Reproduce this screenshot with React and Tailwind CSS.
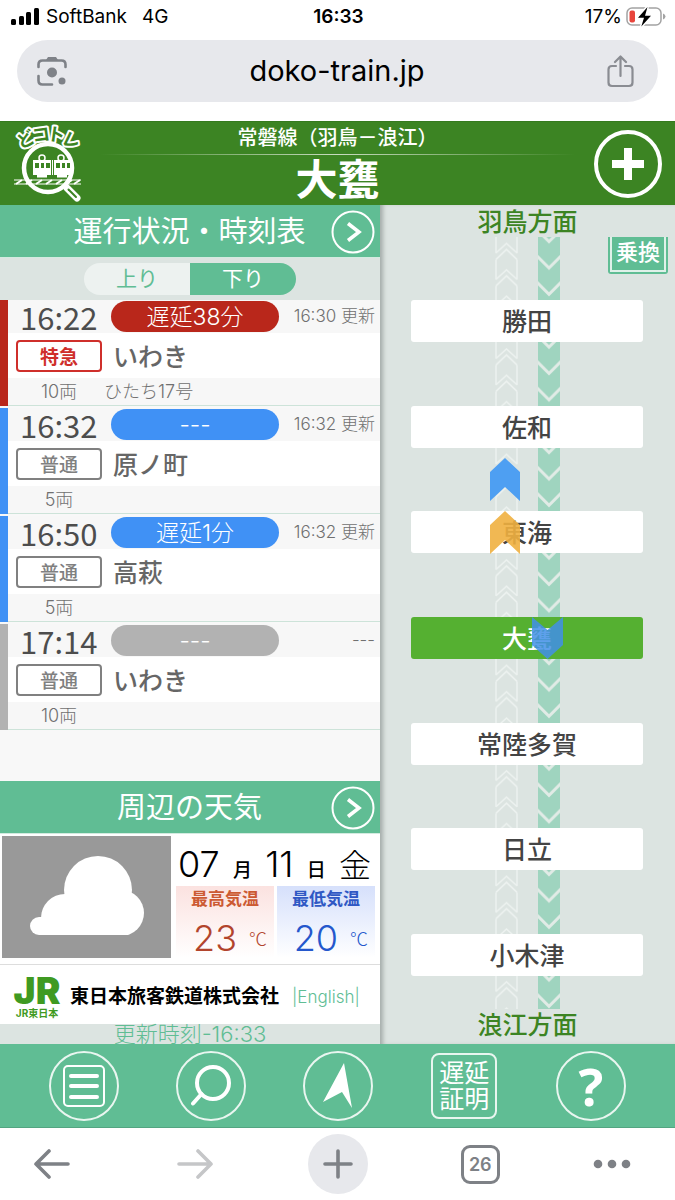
import { useState } from "react";

const trains = [
  {
    time: "16:22",
    status: "遅延38分",
    updated: "16:30 更新",
    type: "特急",
    dest: "いわき",
    cars: "10両",
    name: "ひたち17号",
    bar: "bg-[#b9271b]",
    typeStyle: "border-[#cf2f2b] text-[#cf2f2b] font-bold",
  },
  {
    time: "16:32",
    status: "---",
    updated: "16:32 更新",
    type: "普通",
    dest: "原ノ町",
    cars: "5両",
    bar: "bg-[#4091f5]",
    typeStyle: "border-[#808080] text-[#808080] font-medium",
  },
  {
    time: "16:50",
    status: "遅延1分",
    updated: "16:32 更新",
    type: "普通",
    dest: "高萩",
    cars: "5両",
    bar: "bg-[#4091f5]",
    typeStyle: "border-[#808080] text-[#808080] font-medium",
  },
  {
    time: "17:14",
    status: "---",
    updated: "---",
    type: "普通",
    dest: "いわき",
    cars: "10両",
    bar: "bg-[#b2b2b2]",
    typeStyle: "border-[#808080] text-[#808080] font-medium",
  },
];

const stations = ["勝田", "佐和", "東海", "大甕", "常陸多賀", "日立", "小木津"];

const StatusBar = () => (
  <div className="grid grid-cols-3 items-center h-[34px] pl-[11px] pr-[9px] text-[19px]">
    <div className="flex items-center gap-[7px] whitespace-nowrap">
      <svg width="28" height="18" viewBox="0 0 28 18" aria-hidden="true">
        <rect x="0" y="11" width="5" height="6" rx="1.5" />
        <rect x="8" y="8" width="5" height="9" rx="1.5" />
        <rect x="15" y="4" width="5" height="13" rx="1.5" />
        <rect x="23" y="0" width="5" height="17" rx="1.5" />
      </svg>
      <span>SoftBank</span>
      <span className="ml-2">4G</span>
    </div>
    <div className="text-center font-semibold">16:33</div>
    <div className="flex items-center justify-end gap-1">
      <span>17%</span>
      <svg width="40" height="20" viewBox="0 0 40 20" aria-hidden="true">
        <rect x="1" y="1" width="34" height="17" rx="5" fill="none" stroke="#a3a3a3" strokeWidth="1.5" />
        <rect x="3.500" y="3.500" width="5.500" height="12" rx="2" fill="#e8453c" />
        <path d="M37 6.500q2.500 1 2.500 3t-2.500 3z" fill="#a3a3a3" />
        <path d="M21.500 0 12 10.800h6L15.300 19.500 25 8.700h-6z" stroke="#fff" strokeWidth="3" />
        <path d="M21.500 0 12 10.800h6L15.300 19.500 25 8.700h-6z" />
      </svg>
    </div>
  </div>
);

const AddressBar = () => (
  <div className="flex items-center justify-between h-[62px] mx-[17px] mt-1.5 mb-[19px] px-5 rounded-full bg-[#e7e8ec]">
    <button aria-label="画像で検索">
      <svg width="30" height="31" viewBox="0 0 30 31" fill="none" stroke="#7f8288" strokeWidth="2.600" strokeLinecap="round">
        <path d="M1.500 11V8.500q0-4 4-4h19q4 0 4 4V11M1.500 20v4.500q0 4 4 4H15" />
        <path d="M9 4 11 1h8l2 3z" fill="#7f8288" stroke="none" />
        <circle cx="15" cy="16.500" r="5" fill="#7f8288" stroke="none" />
        <circle cx="25" cy="25" r="3.500" fill="#7f8288" stroke="none" />
      </svg>
    </button>
    <span className="text-[29px]">doko-train.jp</span>
    <button aria-label="共有" className="mr-1">
      <svg width="27" height="33" viewBox="0 0 27 33" fill="none" stroke="#8a8c92" strokeWidth="2.200" strokeLinecap="round" strokeLinejoin="round">
        <path d="M9 11H5q-3.500 0-3.500 3.500v13Q1.500 31 5 31h17q3.500 0 3.500-3.500v-13Q25.500 11 22 11h-4" />
        <path d="M13.500 21V2M8 7l5.500-5.500L19 7" />
      </svg>
    </button>
  </div>
);

const Logo = () => (
  <svg width="70" height="80" viewBox="0 0 70 80" role="img" aria-label="どコトレ" className="overflow-visible">
    <circle cx="34" cy="44" r="24" fill="none" stroke="#fff" strokeWidth="4.500" />
    <path d="M53 64 63 74" stroke="#fff" strokeWidth="7" strokeLinecap="round" />
    <path d="M54.500 65.500 62 73" stroke="#3c8423" strokeWidth="2" strokeLinecap="round" />
    <circle cx="28" cy="34" r="3" fill="none" stroke="#fff" strokeWidth="1.500" />
    <circle cx="47" cy="34" r="3" fill="none" stroke="#fff" strokeWidth="1.500" />
    <path d="M19 36h38v15H19z" fill="#fff" />
    <path d="M37.500 36v16M39.500 36v16" stroke="#3c8423" strokeWidth="1" />
    <path d="M21 39h4v5h-4zM27 39h3v5h-3zM32 39h4v5h-4zM42 39h4v5h-4zM48 39h3v5h-3zM53 39h3v5h-3z" fill="#3c8423" />
    <path d="M23 52h10M43 52h10" stroke="#fff" strokeWidth="3" />
    <path d="M0 56h67M0 60h67" stroke="#fff" strokeWidth="1.200" />
    <path d="M2 60 8 56M12 60l6-4M22 60l6-4M32 60l6-4M42 60l6-4M52 60l6-4M60 60l6-4" stroke="#fff" strokeWidth="2" />
    <g fill="#3c8423" stroke="#fff" strokeWidth="4" strokeLinejoin="round" paintOrder="stroke" className="text-[18px] font-bold">
      <text x="3" y="22" transform="rotate(-26 12 16)">ど</text>
      <text x="18" y="17" transform="rotate(-8 27 11)">コ</text>
      <text x="33" y="17" transform="rotate(8 42 11)">ト</text>
      <text x="48" y="23" transform="rotate(26 57 17)">レ</text>
    </g>
  </svg>
);

const LineHeader = () => (
  <header className="flex items-center h-[84px] bg-[#3c8423] text-white border-t border-[#357a1e]">
    <div className="w-[100px] pl-[14px]">
      <Logo />
    </div>
    <div className="flex-1 flex flex-col items-center">
      <p className="h-8 leading-8 text-[20px] font-medium whitespace-nowrap">常磐線（羽鳥－浪江）</p>
      <div className="w-full h-px bg-linear-to-r from-transparent via-[#c8dcc0] to-transparent" />
      <h1 className="h-[50px] leading-[50px] text-[42px] font-bold">大甕</h1>
    </div>
    <div className="w-[100px] flex justify-end pr-[13px]">
      <button aria-label="追加" className="size-[68px] rounded-full border-4 border-white flex items-center justify-center">
        <svg width="32" height="32" viewBox="0 0 32 32" fill="#fff">
          <path d="M12 0h8v12h12v8H20v12h-8V20H0v-8h12z" />
        </svg>
      </button>
    </div>
  </header>
);

const SectionHeader = ({ title }) => (
  <button className="flex items-center justify-between w-full h-[53px] pt-0.5 pr-[5px] bg-[#60bd94] text-white border-b border-[#d3ebe0]">
    <span className="flex-1 pl-[48px] text-center text-[29px]">{title}</span>
    <svg width="44" height="44" viewBox="0 0 44 44" fill="none" stroke="#fff">
      <circle cx="22" cy="22" r="20.500" strokeWidth="2" />
      <path d="M17 13.500 28 22 17 30.500" strokeWidth="3.500" />
    </svg>
  </button>
);

const DirectionTabs = () => {
  const [active, setActive] = useState("下り");

  return (
    <div className="flex justify-center h-[42px] pt-[5px] bg-[#dce4e1]">
      <div className="flex h-8 w-[212px] rounded-full overflow-hidden">
        {["上り", "下り"].map((dir) => (
          <button
            key={dir}
            onClick={() => setActive(dir)}
            className={
              active === dir
                ? "flex-1 bg-[#60bd94] text-white text-[21px] leading-8"
                : "flex-1 bg-[#edf2f0] text-[#60bd94] text-[21px] leading-8"
            }
          >
            {dir}
          </button>
        ))}
      </div>
    </div>
  );
};

const TrainCard = ({ train }) => (
  <li className="flex mb-0.5">
    <div className={`w-2 ${train.bar}`} />
    <div className="flex-1 border-b border-[#cde3d9]">
      <div className="flex items-center h-[33px] pl-3 pr-[5px] bg-[#f7f7f7]">
        <span className="w-[91px] font-['Noto_Sans_CJK_JP',sans-serif] text-[31px] leading-[33px] text-[#4d4d4d]">
          {train.time}
        </span>
        <span className={`w-[168px] h-[31px] leading-[33px] rounded-full text-center text-[23px] font-light text-white ${train.bar}`}>
          {train.status}
        </span>
        <span className="flex-1 text-right text-[17px] font-light text-[#707070] whitespace-nowrap">{train.updated}</span>
      </div>
      <div className="flex items-center gap-[11px] h-[45px] pl-2 bg-white font-['Noto_Sans_CJK_JP',sans-serif]">
        <span className={`w-[86px] h-8 leading-7 border-2 rounded-[4px] text-center text-[19px] ${train.typeStyle}`}>
          {train.type}
        </span>
        <span className="text-[25px] font-medium text-[#666]">{train.dest}</span>
      </div>
      <div className="flex items-center gap-0.5 h-[27px] pl-2 bg-[#f7f7f7] text-[18px] font-light text-[#707070]">
        <span className="w-[86px] text-center">{train.cars}</span>
        <span>{train.name}</span>
      </div>
    </div>
  </li>
);

const Weather = () => (
  <div className="flex h-[131px] pt-0.5 pl-0.5 pr-[5px] bg-white border-b border-[#ddd]">
    <div className="flex items-center justify-center w-[169px] h-[122px] pb-1 bg-[#999]">
      <svg width="114" height="79" viewBox="0 0 114 79" fill="#fff" role="img" aria-label="くもり">
        <circle cx="68" cy="34" r="34" />
        <circle cx="91" cy="57" r="23" />
        <circle cx="35" cy="62" r="24" />
        <circle cx="9" cy="70" r="9" />
        <path d="M9 61h82v18H9zM35 40h56v39H35z" />
      </svg>
    </div>
    <div className="flex-1 pl-[5px]">
      <div className="flex items-baseline justify-between h-[50px] leading-[56px] pl-0.5 pr-1 text-black">
        <span className="text-[36px] font-light">07</span>
        <span className="text-[19px] font-medium">月</span>
        <span className="text-[36px] font-light">11</span>
        <span className="text-[19px] font-medium">日</span>
        <span className="text-[32px] font-light">金</span>
      </div>
      <div className="flex gap-[3px]">
        <div className="flex-1 h-[72px] bg-linear-to-b from-[#fbe2e0] to-white text-center">
          <p className="h-[26px] leading-[26px] text-[17px] font-bold text-[#cc5a33]">最高気温</p>
          <p className="flex items-center justify-end gap-3 h-[52px] pr-[7px] text-[#b2442c]">
            <span className="text-[36px] font-light">23</span>
            <span className="font-['Noto_Sans_CJK_JP',sans-serif] text-[18px] leading-none font-light">℃</span>
          </p>
        </div>
        <div className="flex-1 h-[72px] bg-linear-to-b from-[#d6e0fb] to-white text-center">
          <p className="h-[26px] leading-[26px] text-[17px] font-bold text-[#2f58c4]">最低気温</p>
          <p className="flex items-center justify-end gap-3 h-[52px] pr-[7px] text-[#2457cc]">
            <span className="text-[36px] font-light">20</span>
            <span className="font-['Noto_Sans_CJK_JP',sans-serif] text-[18px] leading-none font-light">℃</span>
          </p>
        </div>
      </div>
    </div>
  </div>
);

const Company = () => (
  <div className="flex items-center h-[59px] pt-1.5 pl-[11px] bg-white">
    <div className="w-[52px] text-center text-[#3f9a22]">
      <p className="h-[30px] leading-[30px] text-[37px] font-black">JR</p>
      <p className="h-[14px] leading-[14px] text-[10px] font-bold">JR東日本</p>
    </div>
    <p className="ml-[7px] text-[19px] font-bold text-black whitespace-nowrap">東日本旅客鉄道株式会社</p>
    <a href="#english" className="ml-[13px] text-[17px] font-light text-[#60bd94]">|English|</a>
  </div>
);

const Tracks = () => (
  <svg className="absolute top-0 left-[115px] h-full" width="66" aria-hidden="true">
    <defs>
      <pattern id="up" width="23" height="26.370" y="5.500" patternUnits="userSpaceOnUse">
        <path d="M1 10.500 11.500 1 22 10.500M1 17 11.500 7 22 17" fill="none" stroke="#edf2f0" strokeWidth="1.500" />
        <path d="M1 0v10.500M22 0v10.500M1 17v9.500M22 17v9.500" stroke="#edf2f0" strokeWidth="1.500" />
      </pattern>
      <pattern id="down" x="43" width="22" height="26.370" y="15" patternUnits="userSpaceOnUse">
        <path d="M0 0h22v27H0z" fill="#9fd4bf" />
        <path d="M-1 4 11 16 23 4" fill="none" stroke="#e1ebe6" strokeWidth="3" />
      </pattern>
    </defs>
    <rect width="23" height="100%" fill="url(#up)" />
    <rect x="43" width="22" height="100%" fill="url(#down)" />
  </svg>
);

const RouteMap = () => (
  <section className="flex-1 flex flex-col text-center shadow-[inset_5px_0_4px_-2px_#a5adaa]">
    <h2 className="h-8 leading-[35px] text-[25px] font-medium text-[#3c8423]">羽鳥方面</h2>
    <div className="relative flex-1 flex flex-col justify-between pl-[31px] pr-8 pt-[63px] pb-[33px]">
      <Tracks />
      <button className="absolute top-0 right-[7px] w-[60px] h-[37px] px-0.5 pb-0.5 rounded-b-[3px] bg-[#60bd94] text-white">
        <span className="block h-full leading-[30px] border-2 border-t-0 border-[#dff1e9] text-[22px] font-medium">乗換</span>
      </button>
      {stations.map((station) => (
        <button
          key={station}
          className={
            station === "大甕"
              ? "relative h-[42px] rounded-[3px] bg-[#55b031] text-white text-[25px] leading-[44px] font-medium"
              : "relative h-[42px] rounded-[3px] bg-white text-[#444] text-[25px] leading-[44px] font-medium"
          }
        >
          {station}
        </button>
      ))}
      {/* running trains */}
      <svg className="absolute top-[221px] left-[110px]" width="30" height="43" viewBox="0 0 30 43" fill="#4e9ff2">
        <path d="M0 14 15 0 30 14V43L15 29 0 43z" />
      </svg>
      <svg className="absolute top-[274px] left-[110px]" width="30" height="43" viewBox="0 0 30 43" fill="#f0b040" fillOpacity="0.9">
        <path d="M0 14 15 0 30 14V43L15 29 0 43z" />
      </svg>
      <svg className="absolute top-[380px] left-[152px]" width="31" height="42" viewBox="0 0 31 42" fill="#428fe8" fillOpacity="0.85">
        <path d="M0 0 15.500 13 31 0V28L15.500 42 0 28z" />
      </svg>
    </div>
    <h2 className="h-[35px] leading-[32px] text-[25px] font-medium text-[#3c8423]">浪江方面</h2>
  </section>
);

const RoundButton = ({ label, children }) => (
  <button aria-label={label} className="size-[70px] rounded-full border-2 border-[#e9f6f0] flex items-center justify-center">
    {children}
  </button>
);

const AppMenu = () => (
  <nav className="flex items-center justify-between h-[84px] px-[49px] bg-[#60bd94] border-b border-[#53a581] text-white">
    <RoundButton label="メニュー">
      <svg width="42" height="42" viewBox="0 0 42 42" fill="none" stroke="#fff" strokeLinecap="round">
        <rect x="1" y="1" width="40" height="40" rx="4" strokeWidth="2" />
        <path d="M8 11h26M8 21h26M8 32h26" strokeWidth="4" />
      </svg>
    </RoundButton>
    <RoundButton label="検索">
      <svg width="40" height="42" viewBox="0 0 40 42" fill="none" stroke="#fff" strokeLinecap="round">
        <circle cx="22" cy="18" r="16" strokeWidth="4" />
        <path d="M10.500 29 2 38.500" strokeWidth="4" />
      </svg>
    </RoundButton>
    <RoundButton label="現在地">
      <svg width="30" height="45" viewBox="0 0 30 45" fill="#fff">
        <path d="M21 0 29 45 19 29 0 39z" />
      </svg>
    </RoundButton>
    <button className="size-[66px] mx-0.5 rounded-[8px] border-2 border-[#e9f6f0] text-[25px] leading-[26px]">
      遅延
      <br />
      証明
    </button>
    <RoundButton label="ヘルプ">
      <span className="font-['Open_Sans',sans-serif] text-[52px] leading-none font-bold">?</span>
    </RoundButton>
  </nav>
);

const BrowserToolbar = () => (
  <nav className="flex items-center justify-between h-[72px] px-[22px]">
    <button aria-label="戻る" className="w-[60px] flex justify-center">
      <svg width="36" height="30" viewBox="0 0 36 30" fill="none" stroke="#7e8186" strokeWidth="3.600" strokeLinecap="round" strokeLinejoin="round">
        <path d="M34 15H2M15 2 2 15l13 13" />
      </svg>
    </button>
    <button aria-label="進む" className="w-[60px] flex justify-center">
      <svg width="36" height="30" viewBox="0 0 36 30" fill="none" stroke="#c5c6c8" strokeWidth="3.600" strokeLinecap="round" strokeLinejoin="round">
        <path d="M2 15h32M21 2l13 13-13 13" />
      </svg>
    </button>
    <button aria-label="新しいタブ" className="size-[60px] rounded-full bg-[#e7e8ec] flex items-center justify-center">
      <svg width="30" height="30" viewBox="0 0 30 30" stroke="#7e8186" strokeWidth="3.600" strokeLinecap="round">
        <path d="M2 15h26M15 2v26" />
      </svg>
    </button>
    <button aria-label="タブ一覧" className="w-[60px] flex justify-center">
      <span className="size-[39px] leading-[34px] rounded-[9px] border-3 border-[#7e8186] text-[18px] font-semibold text-[#7e8186]">26</span>
    </button>
    <button aria-label="その他" className="w-[60px]">
      <svg width="38" height="10" viewBox="0 0 38 10" fill="#7e8186">
        <circle cx="5" cy="5" r="4.300" />
        <circle cx="19" cy="5" r="4.300" />
        <circle cx="33" cy="5" r="4.300" />
      </svg>
    </button>
  </nav>
);

export default function App() {
  return (
    <div className="min-h-screen flex flex-col bg-white text-black font-['Inter','Noto_Sans_CJK_JP',sans-serif]">
      <StatusBar />
      <AddressBar />
      <LineHeader />
      <main className="flex-1 flex bg-[#dce4e1]">
        <div className="w-[380px] shrink-0 flex flex-col">
          <SectionHeader title="運行状況・時刻表" />
          <DirectionTabs />
          <ul className="flex-1 bg-[#f8f8f8]">
            {trains.map((train) => (
              <TrainCard key={train.time} train={train} />
            ))}
          </ul>
          <SectionHeader title="周辺の天気" />
          <Weather />
          <Company />
          <p className="h-5 leading-5 text-center text-[22px] font-light text-[#60bd94]">更新時刻-16:33</p>
        </div>
        <RouteMap />
      </main>
      <AppMenu />
      <BrowserToolbar />
    </div>
  );
}
